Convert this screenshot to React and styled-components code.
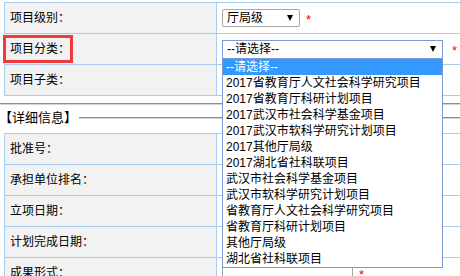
import React from 'react';
import styled, { createGlobalStyle } from 'styled-components';

const categories = [
  '--请选择--',
  '2017省教育厅人文社会科学研究项目',
  '2017省教育厅科研计划项目',
  '2017武汉市社会科学基金项目',
  '2017武汉市软科学研究计划项目',
  '2017其他厅局级',
  '2017湖北省社科联项目',
  '武汉市社会科学基金项目',
  '武汉市软科学研究计划项目',
  '省教育厅人文社会科学研究项目',
  '省教育厅科研计划项目',
  '其他厅局级',
  '湖北省社科联项目',
];

const App = () => {
  return (
    <>
      <GlobalStyle />
      <Page>
        <FormTable>
          <Row>
            <LabelCell>项目级别：</LabelCell>
            <ValueCell>
              <SelectBox $w={78}>
                <span>厅局级</span>
                <Arrow />
              </SelectBox>
              <Required>*</Required>
            </ValueCell>
          </Row>
          <Row>
            <LabelCell>
              项目分类：
              <Marker />
            </LabelCell>
            <ValueCell>
              <SelectWrap>
                <SelectBox $w={221} $h={19} $focused>
                  <span>--请选择--</span>
                  <Arrow />
                </SelectBox>
                <OptionList>
                  {categories.map((item, i) => (
                    <OptionItem key={item} $active={i === 0}>
                      {item}
                    </OptionItem>
                  ))}
                </OptionList>
              </SelectWrap>
              <Required $gap={9}>*</Required>
            </ValueCell>
          </Row>
          <Row>
            <LabelCell>项目子类：</LabelCell>
            <ValueCell />
          </Row>
        </FormTable>

        <Divider />
        <SectionHead>
          <SectionTitle>【详细信息】</SectionTitle>
          <SectionLine />
        </SectionHead>

        <FormTable>
          <Row>
            <LabelCell>批准号：</LabelCell>
            <ValueCell />
          </Row>
          <Row>
            <LabelCell>承担单位排名：</LabelCell>
            <ValueCell />
          </Row>
          <Row>
            <LabelCell>立项日期：</LabelCell>
            <ValueCell />
          </Row>
          <Row>
            <LabelCell>计划完成日期：</LabelCell>
            <ValueCell />
          </Row>
          <Row>
            <LabelCell>成果形式：</LabelCell>
            <ValueCell>
              <SelectBox $w={131} $h={19} $plain />
              <Required $gap={6}>*</Required>
            </ValueCell>
          </Row>
        </FormTable>
      </Page>
    </>
  );
};

const GlobalStyle = createGlobalStyle`
  body {
    margin: 0;
    background: #fff;
    color: #000;
    font-family: "Liberation Sans", "Noto Sans CJK SC", sans-serif;
    font-size: 12px;
  }
`;

const Page = styled.div`
  position: relative;
  width: 460px;
  height: 276px;
  overflow: hidden;
`;

const FormTable = styled.div`
  width: 640px;
  margin: 2px 0 0 4px;
  border-top: 1px solid #a9cbee;
  border-left: 1px solid #a9cbee;
`;

const Row = styled.div`
  display: flex;
  height: 31px;
`;

const LabelCell = styled.div`
  position: relative;
  display: flex;
  align-items: center;
  box-sizing: border-box;
  width: 212px;
  padding-left: 5px;
  border-right: 1px solid #a9cbee;
  border-bottom: 1px solid #a9cbee;
  background: #f2f2f2;
  font-size: 12px;
  line-height: 16px;
`;

const ValueCell = styled.div`
  display: flex;
  flex: 1;
  align-items: center;
  padding-left: 5px;
  border-right: 1px solid #a9cbee;
  border-bottom: 1px solid #a9cbee;
  background: #fff;
`;

const Marker = styled.span`
  position: absolute;
  left: -2px;
  top: 1px;
  width: 64px;
  height: 22px;
  border: 3px solid #ef3b3b;
`;

const SelectWrap = styled.div`
  position: relative;
  display: flex;
`;

const SelectBox = styled.div`
  display: flex;
  align-items: center;
  justify-content: space-between;
  box-sizing: border-box;
  width: ${(p) => p.$w}px;
  height: ${(p) => p.$h || 18}px;
  padding: 0 6px 0 4px;
  border: 1px solid ${(p) => (p.$focused ? '#7b9ad3' : '#a6a6a6')};
  border-radius: ${(p) => (p.$focused ? 0 : 2)}px;
  background: #fff;
  font-size: 12px;
  line-height: 16px;
  ${(p) => p.$plain && 'margin-top: 1px;'}
`;

const Arrow = styled.span`
  width: 0;
  height: 0;
  border-left: 3.5px solid transparent;
  border-right: 3.5px solid transparent;
  border-top: 6px solid #000;
`;

const Required = styled.span`
  margin-left: ${(p) => p.$gap || 6}px;
  padding-top: 3px;
  color: #f00;
  font-family: "Liberation Sans", sans-serif;
  font-size: 13px;
  line-height: 12px;
`;

const OptionList = styled.ul`
  position: absolute;
  top: calc(100% - 1px);
  left: 0;
  z-index: 2;
  box-sizing: border-box;
  width: 100%;
  margin: 0;
  padding: 0;
  list-style: none;
  border: 1px solid #7b9ad3;
  background: #fff;
`;

const OptionItem = styled.li`
  height: 16px;
  padding-left: 3px;
  font-size: 12px;
  line-height: 16px;
  white-space: nowrap;
  color: ${(p) => (p.$active ? '#fff' : '#000')};
  background: ${(p) => (p.$active ? '#3399ff' : 'transparent')};
`;

const Divider = styled.div`
  margin-top: 7px;
  border-top: 1px solid #8c8c8c;
  border-bottom: 1px solid #d4d4d4;
`;

const SectionHead = styled.div`
  display: flex;
  align-items: center;
  height: 26px;
`;

const SectionTitle = styled.span`
  margin-left: -1px;
  font-size: 13px;
  line-height: 16px;
  white-space: nowrap;
`;

const SectionLine = styled.span`
  flex: 1;
  margin-left: 2px;
  border-top: 1px solid #8c8c8c;
  border-bottom: 1px solid #d4d4d4;
`;

export default App;
